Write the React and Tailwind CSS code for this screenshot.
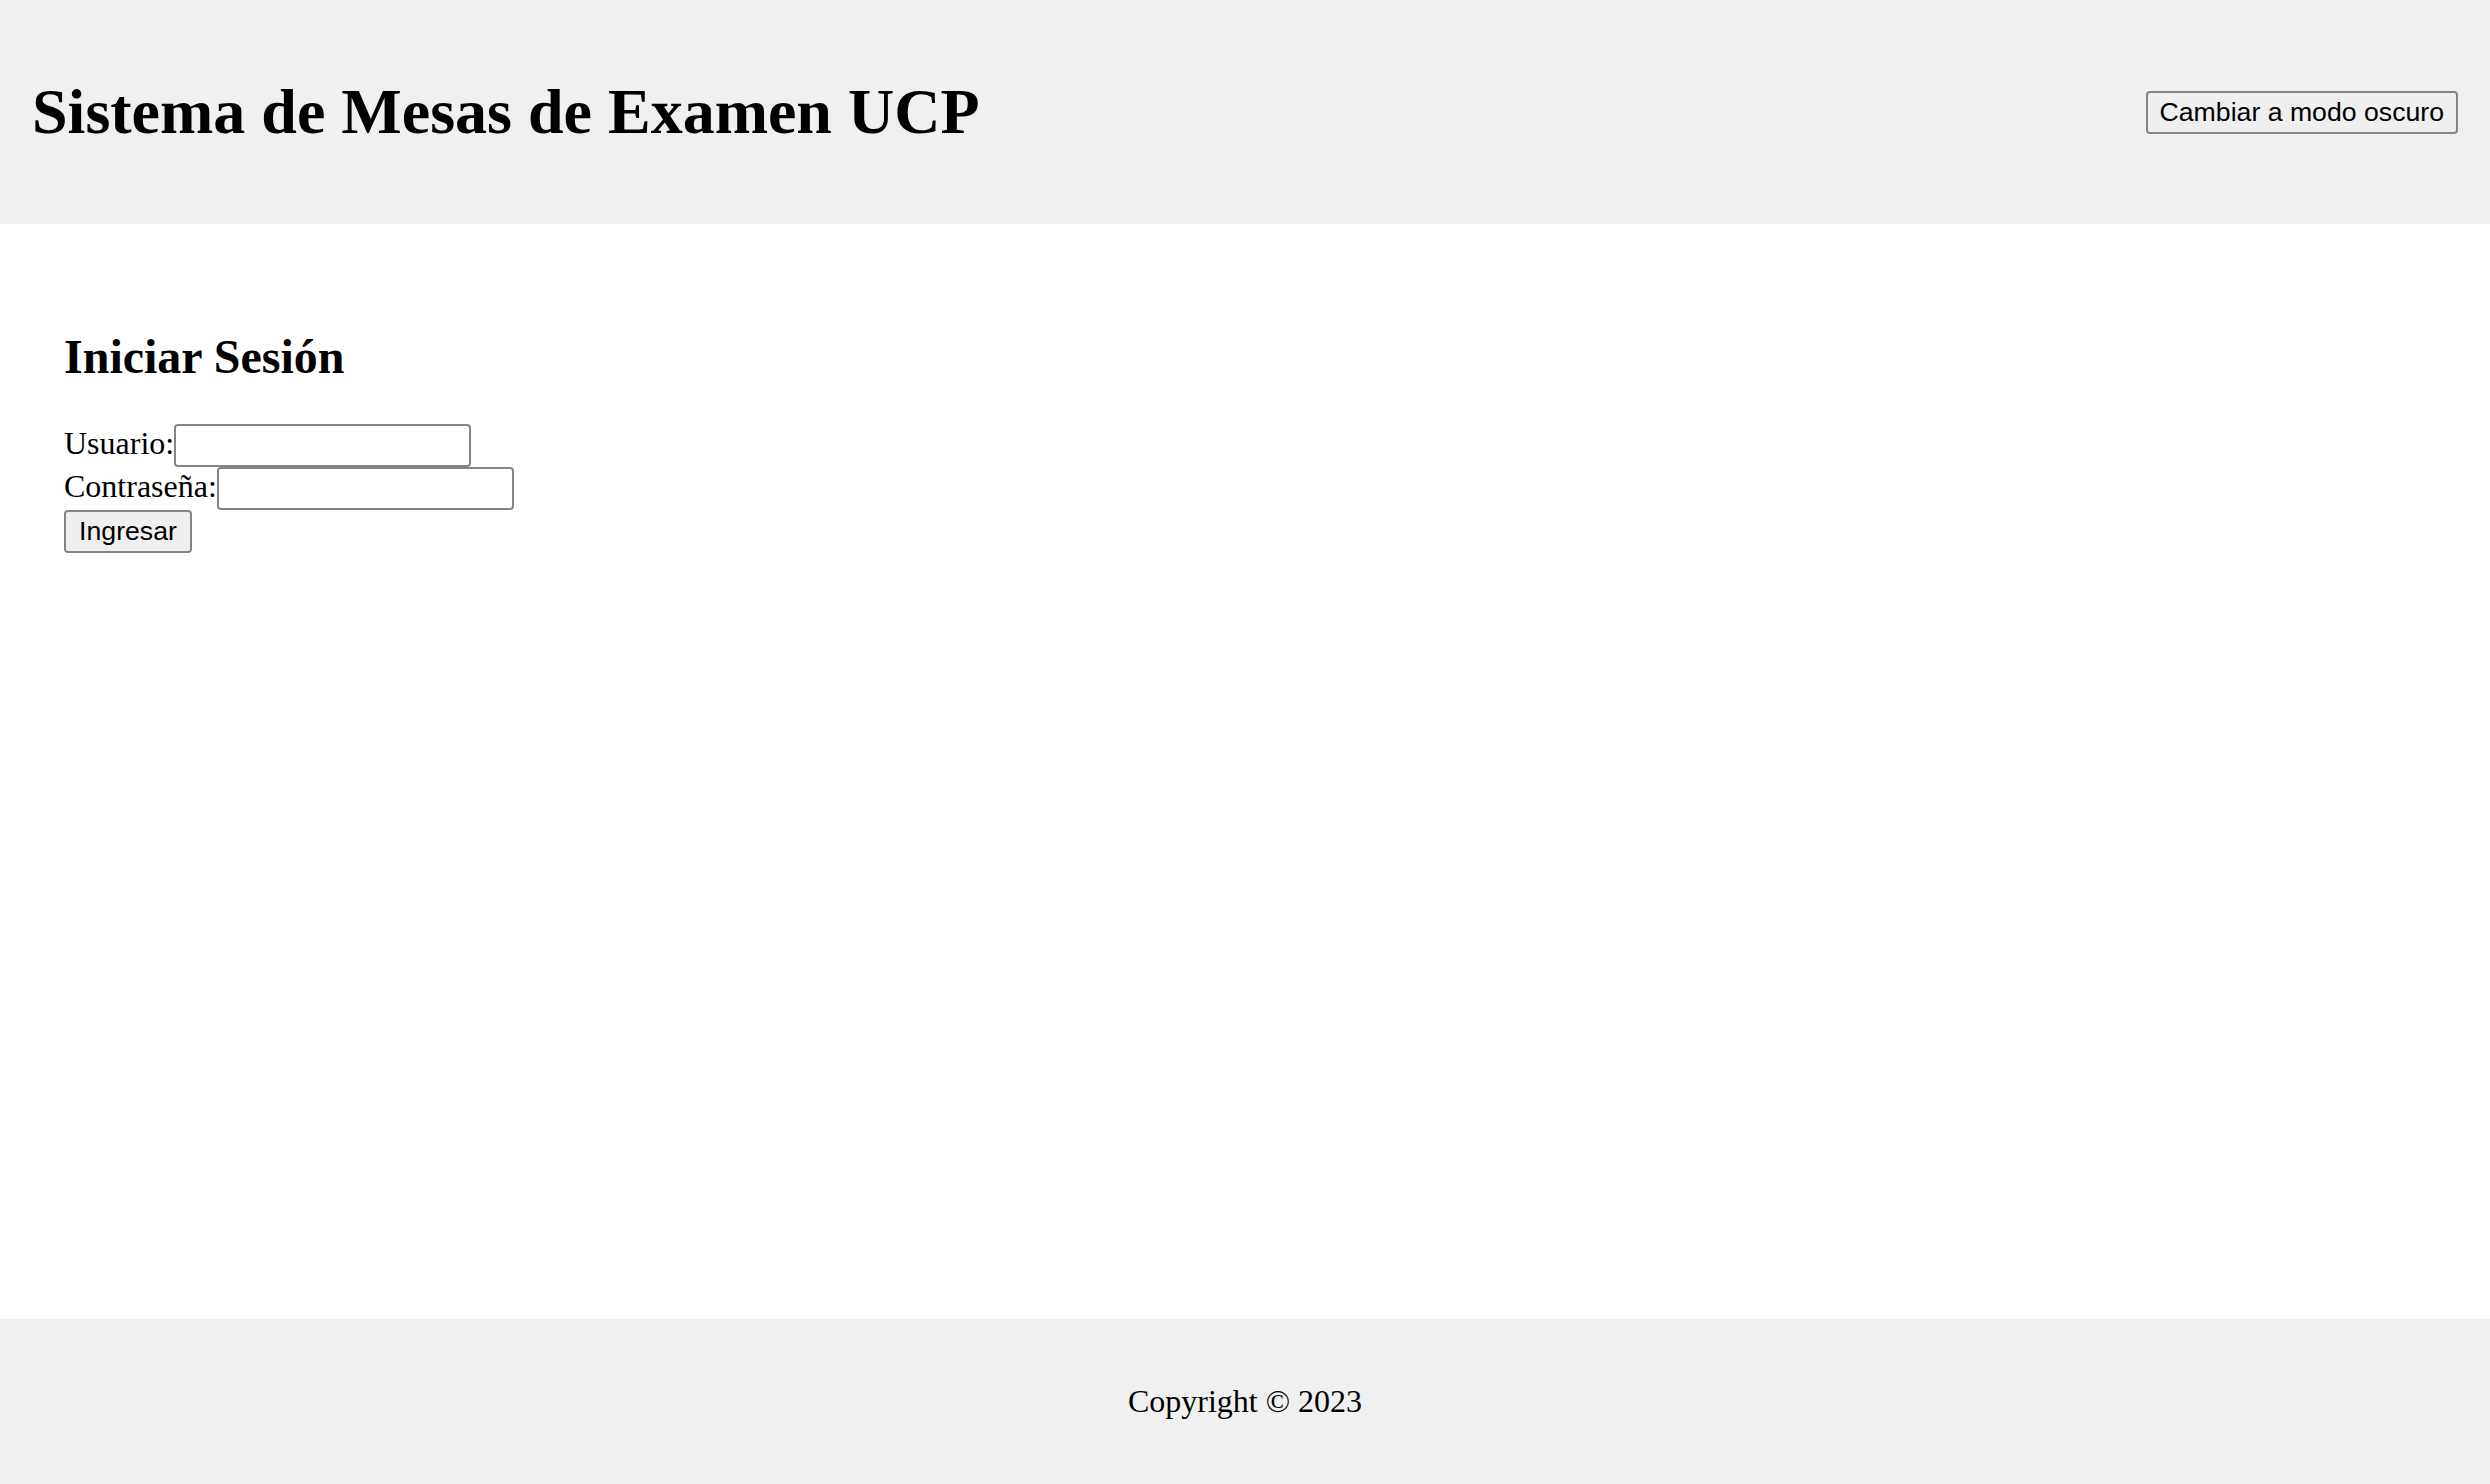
export default function App() {
  return (
    <div className="min-h-screen flex flex-col bg-white text-black font-['Liberation_Serif',serif]">
      <header className="flex justify-between items-center px-[32px] py-[32px] bg-[#f0f0f0]">
        <h1 className="text-[64px] font-bold leading-[normal] my-[43px]">Sistema de Mesas de Examen UCP</h1>
        <button className="h-[43px] font-['Liberation_Sans',Arial,sans-serif] text-[26.67px] leading-[normal] px-[12px] border-2 border-[#858585] rounded-[4px] bg-[#efefef] text-black">
          Cambiar a modo oscuro
        </button>
      </header>
      <main className="flex-1 px-[64px] pt-[65px] pb-[64px]">
        <h2 className="text-[48px] font-bold leading-[normal] my-[40px]">Iniciar Sesión</h2>
        <form className="text-[32px] leading-[normal]" onSubmit={(e) => e.preventDefault()}>
          <label htmlFor="u">Usuario:</label>
          <input id="u" type="text" className="inline-block align-baseline w-[297px] h-[43px] px-[4px] border-2 border-[#858585] rounded-[4px] bg-white font-['Liberation_Sans',Arial,sans-serif] text-[26.67px]" />
          <br />
          <label htmlFor="p">Contraseña:</label>
          <input id="p" type="password" className="inline-block align-baseline w-[297px] h-[43px] px-[4px] border-2 border-[#858585] rounded-[4px] bg-white font-['Liberation_Sans',Arial,sans-serif] text-[26.67px]" />
          <br />
          <button type="submit" className="inline-block align-baseline w-[128px] h-[43px] font-['Liberation_Sans',Arial,sans-serif] text-[26.67px] leading-[normal] border-2 border-[#858585] rounded-[4px] bg-[#efefef] text-black">
            Ingresar
          </button>
        </form>
      </main>
      <footer className="bg-[#f0f0f0] py-[32px] text-center">
        <p className="text-[32px] leading-[normal] my-[32px]">Copyright © 2023</p>
      </footer>
    </div>
  );
}
